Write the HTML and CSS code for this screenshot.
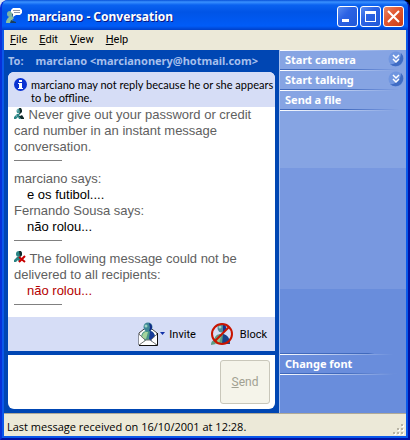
FILE: index.html
```
<!DOCTYPE html>
<html lang="en">
<head>
    <meta charset="UTF-8">
    <meta name="viewport" content="width=device-width, initial-scale=1.0">
    <title>marciano - Conversation</title>
    <link rel="stylesheet" href="styles.css">
</head>
<body>
    <div class="window">
        <header class="titlebar">
            <svg class="app-icon" width="18" height="18" viewBox="0 0 18 18">
                <circle cx="4" cy="7" r="3" fill="#7fb4a4"/>
                <path d="M0 16c0-3 1-4 3-6l3-1 2 2-2 2 4 3z" fill="#8fc09c"/>
                <path d="M5 13l5 2v1H4zM6 8l1-2v3z" fill="#183c60"/>
                <path d="M7 1h7l2 2v3l-2 2h-4l-3 2V7L5 5V3z" fill="#fff"/>
                <path d="M7 3.500h7M8 5.500h6" stroke="#8c96a8"/>
            </svg>
            <h1 class="title">marciano - Conversation</h1>
            <div class="window-buttons">
                <button class="win-btn" aria-label="Minimize">
                    <svg width="19" height="19" viewBox="0 0 19 19"><path d="M4 12h7v3H4z" fill="#fff"/></svg>
                </button>
                <button class="win-btn" aria-label="Maximize">
                    <svg width="19" height="19" viewBox="0 0 19 19"><path d="M4 4h11v11H4zM5 7v7h9V7z" fill="#fff" fill-rule="evenodd"/></svg>
                </button>
                <button class="win-btn close" aria-label="Close">
                    <svg width="19" height="19" viewBox="0 0 19 19"><path d="M4 4l11 11M15 4l-11 11" stroke="#fff" stroke-width="2"/></svg>
                </button>
            </div>
        </header>

        <nav class="menubar">
            <button class="menu-item"><u>F</u>ile</button>
            <button class="menu-item"><u>E</u>dit</button>
            <button class="menu-item"><u>V</u>iew</button>
            <button class="menu-item"><u>H</u>elp</button>
        </nav>

        <main class="content">
            <section class="conversation">
                <div class="recipient">
                    <span>To:</span>
                    <span>marciano &lt;marcianonery@hotmail.com&gt;</span>
                </div>
                <div class="chat">
                    <div class="notice">
                        <svg class="info-icon" width="13" height="13" viewBox="0 0 13 13">
                            <circle cx="6.5" cy="6.5" r="6.5" fill="#0a32d2"/>
                            <path d="M5 2h3v2H5zM4 5h4v5h1v1H4v-1h1V6H4z" fill="#fff"/>
                        </svg>
                        <p>marciano may not reply because he or she appears to be offline.</p>
                    </div>
                    <div class="messages">
                        <p>
                            <svg class="buddy" width="11" height="11" viewBox="0 0 11 11">
                                <circle cx="5" cy="3" r="2.500" fill="#4a9a9a"/>
                                <path d="M5 0h2l1 2v2L6 6H5l1-2zM3 7l3 1 2-1 2 3v1H7L5 9z" fill="#102828"/>
                                <path d="M0 11V9l3-3h3L5 8l2 3H5L4 9l-2 2z" fill="#2a8484"/>
                                <path d="M3 2h1M2 8h1" stroke="#9cc"/>
                            </svg>
                            Never give out your password or credit card number in an instant message conversation.
                        </p>
                        <hr>
                        <p>marciano says:</p>
                        <p class="text">e os futibol....</p>
                        <p>Fernando Sousa says:</p>
                        <p class="text">não rolou...</p>
                        <hr>
                        <p>
                            <svg class="buddy" width="12" height="12" viewBox="0 0 12 12">
                                <circle cx="5" cy="3" r="3" fill="#2a8484"/>
                                <path d="M5 0h2l1 2v2L6 6z" fill="#102828"/>
                                <path d="M0 11V9l3-3h3v5H5L4 9l-2 2z" fill="#2a8484"/>
                                <path d="M5 6l6 5M11 5l-6 6" stroke="#c80000" stroke-width="2"/>
                            </svg>
                            The following message could not be delivered to all recipients:
                        </p>
                        <p class="text failed">não rolou...</p>
                        <hr>
                    </div>
                    <div class="actions">
                        <button class="action">
                            <svg width="27" height="26" viewBox="0 0 27 26">
                                <path d="M1 12l9-7 9 7v12H1z" fill="#fff" stroke="#444"/>
                                <path d="M3 17c0-4 2-7 5-7h4c3 0 5 3 5 7l-4 4H7z" fill="#4a9688"/>
                                <path d="M12 10c3 0 5 3 5 7l-4 4-2-3z" fill="#183c98"/>
                                <path d="M4 17c0-4 2-6 4-6h2l-2 7z" fill="#a4d49c"/>
                                <circle cx="10" cy="6" r="4.5" fill="#3e8696"/>
                                <path d="M11 2a4.500 4.500 0 0 1 0 8.500l1-4z" fill="#102c88"/>
                                <circle cx="8" cy="5" r="1.500" fill="#9cd4c0"/>
                                <path d="M1 14l6 5-6 5zM19 14l-6 5 6 5zM2 24l6-5h4l6 5z" fill="#fff"/>
                                <path d="M1 24l7-5h4l7 5M1 13l6 6M19 13l-6 6" fill="none" stroke="#777"/>
                                <path d="M1 24.500h18.500V12" fill="none" stroke="#111"/>
                                <path d="M22 11h5l-2.500 3z" fill="#1030a8"/>
                            </svg>
                            Invite
                        </button>
                        <button class="action block">
                            <svg width="24" height="26" viewBox="0 0 24 26">
                                <path d="M1 24c0-3 1-4 3-5 1-4 3-6 7-6s8 3 9 10H6z" fill="#5f9c84"/>
                                <path d="M13 13c5 1 7 5 7 10h-8z" fill="#18428c"/>
                                <path d="M5 21c1-4 3-6 6-6l-2 8H5z" fill="#94c494"/>
                                <circle cx="12" cy="7" r="4.500" fill="#4b8c9c"/>
                                <path d="M13 3a4.500 4.500 0 0 1 0 8.500z" fill="#173090"/>
                                <circle cx="10" cy="6" r="1.500" fill="#a4d4c4"/>
                                <circle cx="12" cy="13" r="10" fill="none" stroke="#c81400" stroke-width="2"/>
                                <path d="M19 6L5 20" stroke="#c81400" stroke-width="2"/>
                            </svg>
                            Block
                        </button>
                    </div>
                </div>
                <div class="composer">
                    <textarea class="input" aria-label="Message"></textarea>
                    <button class="send" disabled><u>S</u>end</button>
                </div>
            </section>

            <aside class="sidebar">
                <button class="task">
                    Start camera
                    <svg class="chevron" width="16" height="16" viewBox="0 0 16 16">
                        <circle cx="8" cy="8" r="7.500" fill="#7096e0"/>
                        <path d="M13 2a7.500 7.500 0 0 1-11 11c5 1 11-4 11-11z" fill="#3f6cc4"/>
                        <path d="M5 4l3 3 3-3M5 8l3 3 3-3" fill="none" stroke="#fff" stroke-width="1.500"/>
                    </svg>
                </button>
                <button class="task">
                    Start talking
                    <svg class="chevron" width="16" height="16" viewBox="0 0 16 16">
                        <circle cx="8" cy="8" r="7.500" fill="#7096e0"/>
                        <path d="M13 2a7.500 7.500 0 0 1-11 11c5 1 11-4 11-11z" fill="#3f6cc4"/>
                        <path d="M5 4l3 3 3-3M5 8l3 3 3-3" fill="none" stroke="#fff" stroke-width="1.500"/>
                    </svg>
                </button>
                <button class="task">Send a file</button>
                <div class="divider"></div>
                <div class="divider font-divider"></div>
                <button class="task">Change font</button>
                <div class="divider bottom-divider"></div>
            </aside>
        </main>

        <footer class="statusbar">
            <span>Last message received on 16/10/2001 at 12:28.</span>
            <svg class="grip" width="12" height="12" viewBox="0 0 12 12">
                <path d="M9 1h2v2H9zM5 5h2v2H5zM9 5h2v2H9zM1 9h2v2H1zM5 9h2v2H5zM9 9h2v2H9z" fill="#fff"/>
                <path d="M8 0h2v2H8zM4 4h2v2H4zM8 4h2v2H8zM0 8h2v2H0zM4 8h2v2H4zM8 8h2v2H8z" fill="#b8b4a4"/>
            </svg>
        </footer>
    </div>
</body>
</html>
```
FILE: styles.css
```
* {
    box-sizing: border-box;
}

body {
    margin: 0;
    background: linear-gradient(90deg, #dce4f4 50%, #000 50%);
    font-family: Roboto, "Open Sans", sans-serif;
    font-size: 11px;
    color: #000;
}

p, h1 {
    margin: 0;
}

button {
    font: inherit;
    color: inherit;
    border: 0;
    padding: 0;
    background: none;
}

svg {
    flex: none;
}

.window {
    display: flex;
    flex-direction: column;
    min-height: 100vh;
    padding: 0 2px 2px;
    border: 2px solid #0831d9;
    border-color: #0831d9 #0012a4 #0012a4 #0831d9;
    border-top: 0;
    border-radius: 8px 8px 0 0;
    overflow: hidden;
    background: #0a58ea;
}

.titlebar {
    display: flex;
    align-items: center;
    height: 30px;
    margin: 0 -2px;
    padding: 2px 4px 0 4px;
    background: linear-gradient(#0750d8, #3a91ff 2px, #0a62f0 5px, #0054e6 12px, #005cf8 26px, #0040c8);
}

.title {
    flex: 1;
    margin-left: 3px;
    font-family: "Noto Sans", sans-serif;
    font-size: 12px;
    font-weight: bold;
    color: #fff;
    text-shadow: 1px 1px #0a1883;
}

.window-buttons {
    display: flex;
    gap: 2px;
}

.win-btn {
    width: 21px;
    height: 21px;
    border: 1px solid #fff;
    border-radius: 3px;
    background: linear-gradient(135deg, #5a8cf0, #2c63e4 40%, #2058d8);
}

.win-btn svg {
    display: block;
}

.close {
    background: linear-gradient(135deg, #e88868, #e25a34 40%, #cc3c14);
}

.menubar {
    display: flex;
    gap: 12px;
    height: 20px;
    padding: 0 6px 2px;
    background: #ece9d8;
}

.content {
    flex: 1;
    display: grid;
    grid-template-columns: 1fr 127px;
}

.conversation {
    display: flex;
    flex-direction: column;
    padding: 0 4px 4px;
    background: #0046b3;
}

.recipient {
    display: flex;
    align-items: center;
    gap: 12px;
    height: 22px;
    padding-bottom: 2px;
    font-family: "Noto Sans", sans-serif;
    font-weight: bold;
    color: #a6bfec;
    white-space: nowrap;
}

.chat {
    flex: 1;
    display: flex;
    flex-direction: column;
    background: #fff;
    border-radius: 6px 6px 0 0;
    overflow: hidden;
}

.notice {
    display: flex;
    gap: 4px;
    height: 35px;
    padding: 6px 0 0 6px;
    font-family: Lato, "Liberation Sans", sans-serif;
    line-height: 13px;
    background: #d6ddf6;
}

.messages {
    flex: 1;
    padding: 0 6px;
    font-family: "Liberation Sans", Arial, sans-serif;
    font-size: 13px;
    line-height: 16px;
    color: #606060;
}

.messages .text {
    padding-left: 13px;
    color: #000;
}

.messages .failed {
    color: #b40000;
}

.messages hr {
    width: 48px;
    height: 1px;
    margin: 5px 0 10px;
    border: 0;
    background: #808080;
}

.actions {
    display: flex;
    justify-content: flex-end;
    gap: 14px;
    height: 34px;
    padding-right: 8px;
    background: #d6ddf6;
}

.action {
    display: flex;
    align-items: center;
    gap: 4px;
}

.block {
    gap: 6px;
}

.composer {
    display: flex;
    height: 54px;
    margin-top: 4px;
    padding: 5px;
    background: #fff;
    border-radius: 0 0 6px 6px;
}

.input {
    flex: 1;
    min-width: 0;
    border: 0;
    padding: 0;
    resize: none;
    outline: 0;
}

.send {
    width: 50px;
    border: 1px solid #c9c7ba;
    border-radius: 3px;
    background: #f5f4ea;
    color: #a1a192;
    font-size: 12px;
}

.sidebar {
    display: flex;
    flex-direction: column;
    border-left: 1px solid #a8c0ee;
    background: linear-gradient(#86a4e3 118px, #7898e0 118px 239px, #698ddc 239px);
}

.task {
    display: flex;
    align-items: center;
    justify-content: space-between;
    height: 20px;
    padding: 0 2px 2px 5px;
    font-family: "Noto Sans", sans-serif;
    font-weight: bold;
    color: #fff;
    background:
        linear-gradient(90deg, #4069bc 50%, #6e90da 80%, transparent 95%) 0 100% / 100% 1px no-repeat,
        linear-gradient(90deg, #fff, transparent 90%) 0 0 / 100% 1px no-repeat;
}

.divider {
    height: 1px;
    background: linear-gradient(90deg, #fff, transparent 90%);
}

.font-divider {
    margin-top: auto;
    background: linear-gradient(90deg, #4069bc 70%, transparent 75%);
}

.bottom-divider {
    margin-bottom: 38px;
}

.statusbar {
    display: flex;
    align-items: center;
    justify-content: space-between;
    height: 23px;
    padding: 3px 1px 0 3px;
    font-family: "Open Sans", sans-serif;
    border-top: 1px solid #b0aa98;
    background: #ece9d8;
}

.grip {
    align-self: flex-end;
}
```
